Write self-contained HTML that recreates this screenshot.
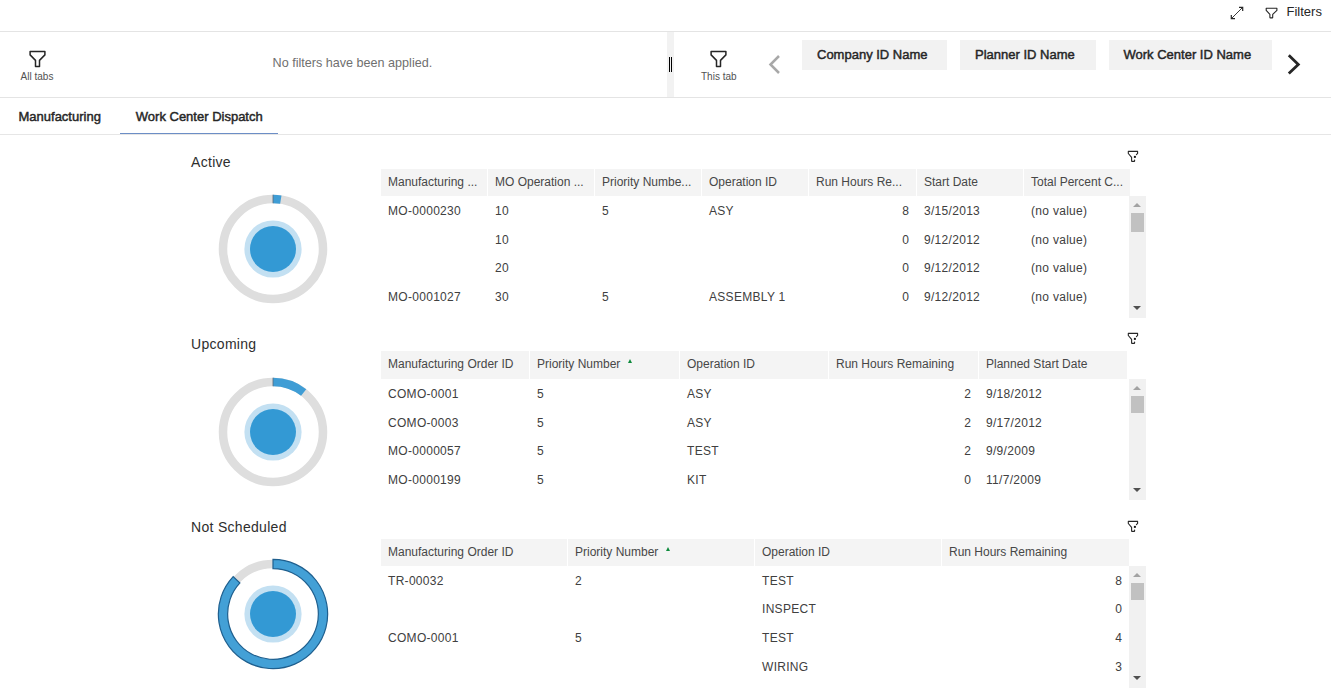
<!DOCTYPE html>
<html><head><meta charset="utf-8"><title>Work Center Dispatch</title>
<style>
html,body{margin:0;padding:0;background:#fff;width:1331px;height:699px;overflow:hidden;}
body{position:relative;font-family:"Liberation Sans", sans-serif;}
.t{position:absolute;white-space:nowrap;line-height:1;}
.r{position:absolute;}
</style></head><body>
<div class="r" style="left:0px;top:31px;width:1331px;height:1px;background:#e4e4e4;"></div>
<svg class="r" style="left:1228px;top:4px" width="18" height="18" viewBox="0 0 18 18">
<path d="M4 14 L14.5 3.5" stroke="#262626" stroke-width="0.9" fill="none"/>
<path d="M11 3.3 L14.7 3.3 L14.7 7" stroke="#262626" stroke-width="1.2" fill="none"/>
<path d="M3.3 11 L3.3 14.7 L7 14.7" stroke="#262626" stroke-width="1.2" fill="none"/>
</svg>
<svg class="r" style="left:1264px;top:6px" width="15" height="14" viewBox="0 0 15 14">
<path d="M2.2 2.3 H12.9 V4.4 L8.7 8.4 V11.4 Q8.7 11.9 8.2 11.9 H6.4 Q5.9 11.9 5.9 11.4 V8.4 L2.2 4.4 Z" stroke="#262626" stroke-width="1.1" fill="none" stroke-linejoin="round"/>
</svg>
<div class="t" style="left:1286.50px;top:5.00px;font-size:13px;color:#262626;font-weight:400;">Filters</div>
<div class="r" style="left:0px;top:97px;width:1331px;height:1px;background:#e4e4e4;"></div>
<svg class="r" style="left:23.6px;top:46px" width="26" height="24" viewBox="0 0 26 24">
<path d="M6.1 5.5 H20.9 V8.9 L15.5 14.4 V20.4 H11.5 V14.4 L6.1 8.9 Z" stroke="#262626" stroke-width="1.5" fill="none" stroke-linejoin="round"/>
</svg>
<div class="t" style="left:20.60px;top:71.53px;font-size:10px;color:#525252;font-weight:400;">All tabs</div>
<div class="t" style="left:272.60px;top:57.23px;font-size:12.6px;color:#6f6f6f;font-weight:400;">No filters have been applied.</div>
<div class="r" style="left:667px;top:32px;width:7px;height:65px;background:#f2f2f2;"></div>
<div class="r" style="left:669px;top:57.3px;width:1px;height:14.4px;background:#000;"></div>
<div class="r" style="left:671px;top:57.3px;width:1px;height:14.4px;background:#000;"></div>
<svg class="r" style="left:705px;top:46px" width="26" height="24" viewBox="0 0 26 24">
<path d="M6.1 5.5 H20.9 V8.9 L15.5 14.4 V20.4 H11.5 V14.4 L6.1 8.9 Z" stroke="#262626" stroke-width="1.5" fill="none" stroke-linejoin="round"/>
</svg>
<div class="t" style="left:701.00px;top:71.53px;font-size:10px;color:#525252;font-weight:400;">This tab</div>
<svg class="r" style="left:766px;top:53px" width="17" height="23" viewBox="0 0 17 23">
<path d="M13 3 L4.5 11.5 L13 20" stroke="#a8a8a8" stroke-width="2.5" fill="none"/>
</svg>
<div class="r" style="left:802px;top:40px;width:145px;height:30px;background:#f2f2f2;"></div>
<div class="t" style="left:817.00px;top:48.40px;font-size:13px;color:#262626;font-weight:400;-webkit-text-stroke:0.45px currentColor;">Company ID Name</div>
<div class="r" style="left:960px;top:40px;width:136px;height:30px;background:#f2f2f2;"></div>
<div class="t" style="left:975.00px;top:48.40px;font-size:13px;color:#262626;font-weight:400;-webkit-text-stroke:0.45px currentColor;">Planner ID Name</div>
<div class="r" style="left:1109px;top:40px;width:163px;height:30px;background:#f2f2f2;"></div>
<div class="t" style="left:1123.50px;top:48.40px;font-size:13px;color:#262626;font-weight:400;-webkit-text-stroke:0.45px currentColor;">Work Center ID Name</div>
<svg class="r" style="left:1284px;top:51px" width="19" height="26" viewBox="0 0 19 26">
<path d="M4.8 4.3 L14.3 13.4 L4.8 22.6" stroke="#262626" stroke-width="2.8" fill="none"/>
</svg>
<div class="t" style="left:18.50px;top:110.00px;font-size:13px;color:#262626;font-weight:400;-webkit-text-stroke:0.45px currentColor;">Manufacturing</div>
<div class="t" style="left:135.80px;top:110.00px;font-size:13px;color:#262626;font-weight:400;-webkit-text-stroke:0.45px currentColor;">Work Center Dispatch</div>
<div class="r" style="left:120px;top:133px;width:158px;height:1px;background:#6c8ec6;"></div>
<div class="r" style="left:0px;top:134px;width:1331px;height:1px;background:#e6e6e6;"></div>
<div class="t" style="left:191.00px;top:155.05px;font-size:14px;color:#2e2e2e;font-weight:400;letter-spacing:0.3px;">Active</div>
<svg class="r" style="left:213px;top:189px" width="120" height="120" viewBox="-60 -60 120 120"><circle cx="0" cy="0" r="50" fill="none" stroke="#dedede" stroke-width="8.5"/><path d="M0 -50 A50 50 0 0 1 7.82 -49.38" fill="none" stroke="#3f9dd5" stroke-width="8.5"/><line x1="0" y1="-54.25" x2="0" y2="-45.75" stroke="#5a6a78" stroke-width="0.8"/><circle cx="0" cy="0" r="28.6" fill="#c3e0f2"/><circle cx="0" cy="0" r="23" fill="#3399d4"/></svg>
<svg class="r" style="left:1122.0px;top:146px" width="22" height="20" viewBox="0 0 22 20">
<path d="M6.3 5.4 H15.6 V7.4 L14.4 8.6 M6.3 5.4 V7.5 L9.6 11.4 V15.0 Q9.6 15.4 10.0 15.4 H12.2 Q12.6 15.4 12.6 15.0 V14.0" stroke="#262626" stroke-width="1.1" fill="none" stroke-linejoin="round" stroke-linecap="round"/>
<circle cx="12.9" cy="10.9" r="1.15" fill="#161616"/>
</svg>
<div class="r" style="left:381px;top:169px;width:106px;height:27px;background:#f4f4f4;"></div>
<div class="t" style="left:388.00px;top:175.64px;font-size:12px;color:#474747;font-weight:400;">Manufacturing ...</div>
<div class="r" style="left:488px;top:169px;width:106px;height:27px;background:#f4f4f4;"></div>
<div class="t" style="left:495.00px;top:175.64px;font-size:12px;color:#474747;font-weight:400;">MO Operation ...</div>
<div class="r" style="left:595px;top:169px;width:106px;height:27px;background:#f4f4f4;"></div>
<div class="t" style="left:602.00px;top:175.64px;font-size:12px;color:#474747;font-weight:400;">Priority Numbe...</div>
<div class="r" style="left:702px;top:169px;width:106px;height:27px;background:#f4f4f4;"></div>
<div class="t" style="left:709.00px;top:175.64px;font-size:12px;color:#474747;font-weight:400;">Operation ID</div>
<div class="r" style="left:809px;top:169px;width:107px;height:27px;background:#f4f4f4;"></div>
<div class="t" style="left:816.00px;top:175.64px;font-size:12px;color:#474747;font-weight:400;">Run Hours Re...</div>
<div class="r" style="left:917px;top:169px;width:106px;height:27px;background:#f4f4f4;"></div>
<div class="t" style="left:924.00px;top:175.64px;font-size:12px;color:#474747;font-weight:400;">Start Date</div>
<div class="r" style="left:1024px;top:169px;width:106px;height:27px;background:#f4f4f4;"></div>
<div class="t" style="left:1031.00px;top:175.64px;font-size:12px;color:#474747;font-weight:400;">Total Percent C...</div>
<div class="t" style="left:388.00px;top:204.84px;font-size:12px;color:#404040;font-weight:400;letter-spacing:0.3px;">MO-0000230</div>
<div class="t" style="left:495.00px;top:204.84px;font-size:12px;color:#404040;font-weight:400;letter-spacing:0.3px;">10</div>
<div class="t" style="left:602.00px;top:204.84px;font-size:12px;color:#404040;font-weight:400;letter-spacing:0.3px;">5</div>
<div class="t" style="left:709.00px;top:204.84px;font-size:12px;color:#404040;font-weight:400;letter-spacing:0.3px;">ASY</div>
<div class="t" style="right:422.00px;top:204.84px;font-size:12px;color:#404040;font-weight:400">8</div>
<div class="t" style="left:924.00px;top:204.84px;font-size:12px;color:#404040;font-weight:400;letter-spacing:0.3px;">3/15/2013</div>
<div class="t" style="left:1031.00px;top:204.84px;font-size:12px;color:#404040;font-weight:400;letter-spacing:0.3px;">(no value)</div>
<div class="t" style="left:495.00px;top:233.54px;font-size:12px;color:#404040;font-weight:400;letter-spacing:0.3px;">10</div>
<div class="t" style="right:422.00px;top:233.54px;font-size:12px;color:#404040;font-weight:400">0</div>
<div class="t" style="left:924.00px;top:233.54px;font-size:12px;color:#404040;font-weight:400;letter-spacing:0.3px;">9/12/2012</div>
<div class="t" style="left:1031.00px;top:233.54px;font-size:12px;color:#404040;font-weight:400;letter-spacing:0.3px;">(no value)</div>
<div class="t" style="left:495.00px;top:262.24px;font-size:12px;color:#404040;font-weight:400;letter-spacing:0.3px;">20</div>
<div class="t" style="right:422.00px;top:262.24px;font-size:12px;color:#404040;font-weight:400">0</div>
<div class="t" style="left:924.00px;top:262.24px;font-size:12px;color:#404040;font-weight:400;letter-spacing:0.3px;">9/12/2012</div>
<div class="t" style="left:1031.00px;top:262.24px;font-size:12px;color:#404040;font-weight:400;letter-spacing:0.3px;">(no value)</div>
<div class="t" style="left:388.00px;top:291.04px;font-size:12px;color:#404040;font-weight:400;letter-spacing:0.3px;">MO-0001027</div>
<div class="t" style="left:495.00px;top:291.04px;font-size:12px;color:#404040;font-weight:400;letter-spacing:0.3px;">30</div>
<div class="t" style="left:602.00px;top:291.04px;font-size:12px;color:#404040;font-weight:400;letter-spacing:0.3px;">5</div>
<div class="t" style="left:709.00px;top:291.04px;font-size:12px;color:#404040;font-weight:400;letter-spacing:0.3px;">ASSEMBLY 1</div>
<div class="t" style="right:422.00px;top:291.04px;font-size:12px;color:#404040;font-weight:400">0</div>
<div class="t" style="left:924.00px;top:291.04px;font-size:12px;color:#404040;font-weight:400;letter-spacing:0.3px;">9/12/2012</div>
<div class="t" style="left:1031.00px;top:291.04px;font-size:12px;color:#404040;font-weight:400;letter-spacing:0.3px;">(no value)</div>
<div class="r" style="left:1129px;top:196px;width:17px;height:122px;background:#f1f1f1;"></div>
<div class="r" style="left:1131px;top:213px;width:13px;height:19px;background:#c1c1c1;"></div>
<div class="r" style="left:1133px;top:203px;width:0;height:0;border-left:4.5px solid transparent;border-right:4.5px solid transparent;border-bottom:4px solid #a3a3a3"></div>
<div class="r" style="left:1133px;top:306px;width:0;height:0;border-left:4.5px solid transparent;border-right:4.5px solid transparent;border-top:4px solid #505050"></div>
<div class="t" style="left:191.00px;top:337.15px;font-size:14px;color:#2e2e2e;font-weight:400;letter-spacing:0.3px;">Upcoming</div>
<svg class="r" style="left:213px;top:372px" width="120" height="120" viewBox="-60 -60 120 120"><circle cx="0" cy="0" r="50" fill="none" stroke="#dedede" stroke-width="8.5"/><path d="M0 -50 A50 50 0 0 1 30.65 -39.51" fill="none" stroke="#3f9dd5" stroke-width="8.5"/><line x1="0" y1="-54.25" x2="0" y2="-45.75" stroke="#5a6a78" stroke-width="0.8"/><circle cx="0" cy="0" r="28.6" fill="#c3e0f2"/><circle cx="0" cy="0" r="23" fill="#3399d4"/></svg>
<svg class="r" style="left:1122.0px;top:328px" width="22" height="20" viewBox="0 0 22 20">
<path d="M6.3 5.4 H15.6 V7.4 L14.4 8.6 M6.3 5.4 V7.5 L9.6 11.4 V15.0 Q9.6 15.4 10.0 15.4 H12.2 Q12.6 15.4 12.6 15.0 V14.0" stroke="#262626" stroke-width="1.1" fill="none" stroke-linejoin="round" stroke-linecap="round"/>
<circle cx="12.9" cy="10.9" r="1.15" fill="#161616"/>
</svg>
<div class="r" style="left:381px;top:351px;width:148px;height:28px;background:#f4f4f4;"></div>
<div class="t" style="left:388.00px;top:358.24px;font-size:12px;color:#474747;font-weight:400;">Manufacturing Order ID</div>
<div class="r" style="left:530px;top:351px;width:149px;height:28px;background:#f4f4f4;"></div>
<div class="t" style="left:537.00px;top:358.24px;font-size:12px;color:#474747;font-weight:400;">Priority Number</div>
<div class="r" style="left:680px;top:351px;width:148px;height:28px;background:#f4f4f4;"></div>
<div class="t" style="left:687.00px;top:358.24px;font-size:12px;color:#474747;font-weight:400;">Operation ID</div>
<div class="r" style="left:829px;top:351px;width:149px;height:28px;background:#f4f4f4;"></div>
<div class="t" style="left:836.00px;top:358.24px;font-size:12px;color:#474747;font-weight:400;">Run Hours Remaining</div>
<div class="r" style="left:979px;top:351px;width:148px;height:28px;background:#f4f4f4;"></div>
<div class="t" style="left:986.00px;top:358.24px;font-size:12px;color:#474747;font-weight:400;">Planned Start Date</div>
<div class="r" style="left:628.2px;top:359px;width:0;height:0;border-left:2.6px solid transparent;border-right:2.6px solid transparent;border-bottom:4.2px solid #0e8a3c"></div>
<div class="t" style="left:388.00px;top:388.14px;font-size:12px;color:#404040;font-weight:400;letter-spacing:0.3px;">COMO-0001</div>
<div class="t" style="left:537.00px;top:388.14px;font-size:12px;color:#404040;font-weight:400;letter-spacing:0.3px;">5</div>
<div class="t" style="left:687.00px;top:388.14px;font-size:12px;color:#404040;font-weight:400;letter-spacing:0.3px;">ASY</div>
<div class="t" style="right:360.00px;top:388.14px;font-size:12px;color:#404040;font-weight:400">2</div>
<div class="t" style="left:986.00px;top:388.14px;font-size:12px;color:#404040;font-weight:400;letter-spacing:0.3px;">9/18/2012</div>
<div class="t" style="left:388.00px;top:416.54px;font-size:12px;color:#404040;font-weight:400;letter-spacing:0.3px;">COMO-0003</div>
<div class="t" style="left:537.00px;top:416.54px;font-size:12px;color:#404040;font-weight:400;letter-spacing:0.3px;">5</div>
<div class="t" style="left:687.00px;top:416.54px;font-size:12px;color:#404040;font-weight:400;letter-spacing:0.3px;">ASY</div>
<div class="t" style="right:360.00px;top:416.54px;font-size:12px;color:#404040;font-weight:400">2</div>
<div class="t" style="left:986.00px;top:416.54px;font-size:12px;color:#404040;font-weight:400;letter-spacing:0.3px;">9/17/2012</div>
<div class="t" style="left:388.00px;top:444.84px;font-size:12px;color:#404040;font-weight:400;letter-spacing:0.3px;">MO-0000057</div>
<div class="t" style="left:537.00px;top:444.84px;font-size:12px;color:#404040;font-weight:400;letter-spacing:0.3px;">5</div>
<div class="t" style="left:687.00px;top:444.84px;font-size:12px;color:#404040;font-weight:400;letter-spacing:0.3px;">TEST</div>
<div class="t" style="right:360.00px;top:444.84px;font-size:12px;color:#404040;font-weight:400">2</div>
<div class="t" style="left:986.00px;top:444.84px;font-size:12px;color:#404040;font-weight:400;letter-spacing:0.3px;">9/9/2009</div>
<div class="t" style="left:388.00px;top:473.64px;font-size:12px;color:#404040;font-weight:400;letter-spacing:0.3px;">MO-0000199</div>
<div class="t" style="left:537.00px;top:473.64px;font-size:12px;color:#404040;font-weight:400;letter-spacing:0.3px;">5</div>
<div class="t" style="left:687.00px;top:473.64px;font-size:12px;color:#404040;font-weight:400;letter-spacing:0.3px;">KIT</div>
<div class="t" style="right:360.00px;top:473.64px;font-size:12px;color:#404040;font-weight:400">0</div>
<div class="t" style="left:986.00px;top:473.64px;font-size:12px;color:#404040;font-weight:400;letter-spacing:0.3px;">11/7/2009</div>
<div class="r" style="left:1129px;top:379px;width:17px;height:121px;background:#f1f1f1;"></div>
<div class="r" style="left:1131px;top:396px;width:13px;height:17px;background:#c1c1c1;"></div>
<div class="r" style="left:1133px;top:386px;width:0;height:0;border-left:4.5px solid transparent;border-right:4.5px solid transparent;border-bottom:4px solid #a3a3a3"></div>
<div class="r" style="left:1133px;top:488px;width:0;height:0;border-left:4.5px solid transparent;border-right:4.5px solid transparent;border-top:4px solid #505050"></div>
<div class="t" style="left:191.00px;top:519.95px;font-size:14px;color:#2e2e2e;font-weight:400;letter-spacing:0.3px;">Not Scheduled</div>
<svg class="r" style="left:213px;top:553.7px" width="120" height="120" viewBox="-60 -60 120 120"><circle cx="0" cy="0" r="50" fill="none" stroke="#dedede" stroke-width="8.5"/><path d="M0 -54.65 A54.65 54.65 0 1 1 -39.84 -37.41 L-33.06 -31.04 A45.35 45.35 0 1 0 0 -45.35 Z" fill="#43a0d6" stroke="#1f5f8e" stroke-width="1.2"/><circle cx="0" cy="0" r="28.6" fill="#c3e0f2"/><circle cx="0" cy="0" r="23" fill="#3399d4"/></svg>
<svg class="r" style="left:1122.0px;top:516px" width="22" height="20" viewBox="0 0 22 20">
<path d="M6.3 5.4 H15.6 V7.4 L14.4 8.6 M6.3 5.4 V7.5 L9.6 11.4 V15.0 Q9.6 15.4 10.0 15.4 H12.2 Q12.6 15.4 12.6 15.0 V14.0" stroke="#262626" stroke-width="1.1" fill="none" stroke-linejoin="round" stroke-linecap="round"/>
<circle cx="12.9" cy="10.9" r="1.15" fill="#161616"/>
</svg>
<div class="r" style="left:381px;top:539px;width:186px;height:27px;background:#f4f4f4;"></div>
<div class="t" style="left:388.00px;top:546.44px;font-size:12px;color:#474747;font-weight:400;">Manufacturing Order ID</div>
<div class="r" style="left:568px;top:539px;width:186px;height:27px;background:#f4f4f4;"></div>
<div class="t" style="left:575.00px;top:546.44px;font-size:12px;color:#474747;font-weight:400;">Priority Number</div>
<div class="r" style="left:755px;top:539px;width:186px;height:27px;background:#f4f4f4;"></div>
<div class="t" style="left:762.00px;top:546.44px;font-size:12px;color:#474747;font-weight:400;">Operation ID</div>
<div class="r" style="left:942px;top:539px;width:187px;height:27px;background:#f4f4f4;"></div>
<div class="t" style="left:949.00px;top:546.44px;font-size:12px;color:#474747;font-weight:400;">Run Hours Remaining</div>
<div class="r" style="left:666.2px;top:547px;width:0;height:0;border-left:2.6px solid transparent;border-right:2.6px solid transparent;border-bottom:4.2px solid #0e8a3c"></div>
<div class="t" style="left:388.00px;top:574.84px;font-size:12px;color:#404040;font-weight:400;letter-spacing:0.3px;">TR-00032</div>
<div class="t" style="left:575.00px;top:574.84px;font-size:12px;color:#404040;font-weight:400;letter-spacing:0.3px;">2</div>
<div class="t" style="left:762.00px;top:574.84px;font-size:12px;color:#404040;font-weight:400;letter-spacing:0.3px;">TEST</div>
<div class="t" style="right:209.00px;top:574.84px;font-size:12px;color:#404040;font-weight:400">8</div>
<div class="t" style="left:762.00px;top:603.44px;font-size:12px;color:#404040;font-weight:400;letter-spacing:0.3px;">INSPECT</div>
<div class="t" style="right:209.00px;top:603.44px;font-size:12px;color:#404040;font-weight:400">0</div>
<div class="t" style="left:388.00px;top:632.04px;font-size:12px;color:#404040;font-weight:400;letter-spacing:0.3px;">COMO-0001</div>
<div class="t" style="left:575.00px;top:632.04px;font-size:12px;color:#404040;font-weight:400;letter-spacing:0.3px;">5</div>
<div class="t" style="left:762.00px;top:632.04px;font-size:12px;color:#404040;font-weight:400;letter-spacing:0.3px;">TEST</div>
<div class="t" style="right:209.00px;top:632.04px;font-size:12px;color:#404040;font-weight:400">4</div>
<div class="t" style="left:762.00px;top:660.84px;font-size:12px;color:#404040;font-weight:400;letter-spacing:0.3px;">WIRING</div>
<div class="t" style="right:209.00px;top:660.84px;font-size:12px;color:#404040;font-weight:400">3</div>
<div class="r" style="left:1129px;top:566px;width:17px;height:122px;background:#f1f1f1;"></div>
<div class="r" style="left:1131px;top:583px;width:13px;height:17px;background:#c1c1c1;"></div>
<div class="r" style="left:1133px;top:573px;width:0;height:0;border-left:4.5px solid transparent;border-right:4.5px solid transparent;border-bottom:4px solid #a3a3a3"></div>
<div class="r" style="left:1133px;top:676px;width:0;height:0;border-left:4.5px solid transparent;border-right:4.5px solid transparent;border-top:4px solid #505050"></div>
</body></html>
